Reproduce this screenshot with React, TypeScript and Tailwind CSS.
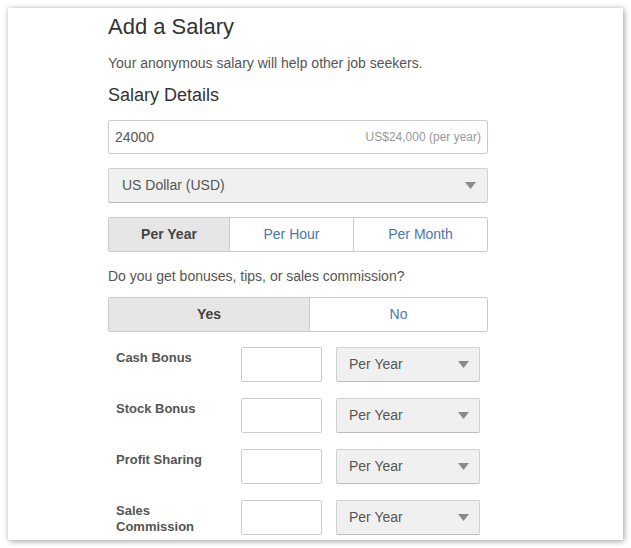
import React from 'react';

const FONT = { fontFamily: '"Liberation Sans", Arial, sans-serif' };

function Arrow() {
  return (
    <svg width="11" height="7" viewBox="0 0 11 7" className="shrink-0">
      <path d="M0 0 H11 L5.5 7 Z" fill="#8a8a8a" />
    </svg>
  );
}

const BONUSES = [
  { label: ['Cash Bonus'] },
  { label: ['Stock Bonus'] },
  { label: ['Profit Sharing'] },
  { label: ['Sales', 'Commission'] },
];

export default function App() {
  return (
    <div className="w-[631px] h-[548px] bg-white p-[8px] pr-[8px]" style={FONT}>
      <div className="w-[615px] h-[532px] bg-white overflow-hidden shadow-[1px_1px_6px_rgba(0,0,0,0.4)]">
        <div className="w-[380px] ml-[100px] pt-[6px]">
          <h1 className="text-[22px] leading-[26px] text-[#333]">Add a Salary</h1>
          <p className="mt-[15px] text-[14px] leading-[16px] text-[#555]">
            Your anonymous salary will help other job seekers.
          </p>
          <h2 className="mt-[14px] text-[18px] leading-[21px] text-[#333]">Salary Details</h2>

          {/* base pay */}
          <div className="mt-[14px] h-[34px] border border-[#ccc] rounded-[2px] flex items-center justify-between pl-[6px] pr-[6px]">
            <span className="text-[14px] text-[#555]">24000</span>
            <span className="text-[12px] text-[#999]">US$24,000 (per year)</span>
          </div>

          <div className="mt-[14px] h-[35px] bg-[#f0f0f0] border border-[#d0d0d0] border-b-[#bdbdbd] rounded-[2px] flex items-center justify-between pl-[13px] pr-[11px]">
            <span className="text-[14px] text-[#555]">US Dollar (USD)</span>
            <Arrow />
          </div>

          <div className="mt-[14px] h-[35px] border border-[#ccc] rounded-[2px] flex text-[14px]">
            <div className="w-[120px] bg-[#e6e6e6] flex items-center justify-center font-bold text-[#444]">Per Year</div>
            <div className="w-[124px] border-l border-[#ccc] flex items-center justify-center text-[#4a76b0]">Per Hour</div>
            <div className="flex-1 border-l border-[#ccc] flex items-center justify-center text-[#4a76b0]">Per Month</div>
          </div>

          <p className="mt-[16px] text-[14px] leading-[16px] text-[#555]">
            Do you get bonuses, tips, or sales commission?
          </p>

          <div className="mt-[13px] h-[35px] border border-[#ccc] rounded-[2px] flex text-[14px]">
            <div className="w-[200px] bg-[#e6e6e6] flex items-center justify-center font-bold text-[#444]">Yes</div>
            <div className="flex-1 border-l border-[#ccc] flex items-center justify-center text-[#4a76b0]">No</div>
          </div>

          <div className="mt-[15px] flex flex-col gap-[16px]">
            {BONUSES.map(b => (
              <div key={b.label.join(' ')} className="flex h-[35px] pl-[8px]">
                <div className="w-[125px] pt-[3px] text-[13px] leading-[16px] font-bold text-[#555]">
                  {b.label.map(l => <div key={l}>{l}</div>)}
                </div>
                <div className="w-[81px] h-[35px] border border-[#ccc] rounded-[2px] bg-white" />
                <div className="ml-[14px] w-[144px] h-[35px] bg-[#f0f0f0] border border-[#d0d0d0] border-b-[#bdbdbd] rounded-[2px] flex items-center justify-between pl-[12px] pr-[10px]">
                  <span className="text-[14px] text-[#555]">Per Year</span>
                  <Arrow />
                </div>
              </div>
            ))}
          </div>
        </div>
      </div>
    </div>
  );
}
